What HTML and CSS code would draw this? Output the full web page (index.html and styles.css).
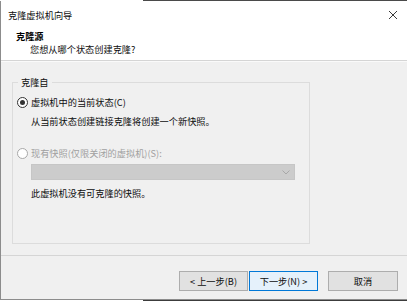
FILE: index.html
```html
<!DOCTYPE html>
<html lang="zh-CN">
<head>
<meta charset="utf-8">
<title>克隆虚拟机向导</title>
<link rel="stylesheet" href="styles.css">
</head>
<body>
<div class="topline"></div>
<div class="window">
  <div class="titlebar">
    <span class="title">克隆虚拟机向导</span>
    <svg class="close" width="10" height="10" viewBox="0 0 10 10"><path d="M1 1 L9 9 M9 1 L1 9" stroke="#3a3a3a" stroke-width="1" fill="none"/></svg>
  </div>
  <div class="header">
    <div class="h-title">克隆源</div>
    <div class="h-sub">您想从哪个状态创建克隆?</div>
  </div>
  <div class="content">
    <fieldset class="group">
      <legend class="legend">克隆自</legend>
      <div class="radio-row">
        <span class="radio checked"></span>
        <span>虚拟机中的当前状态(C)</span>
      </div>
      <div class="desc">从当前状态创建链接克隆将创建一个新快照。</div>
      <div class="radio-row disabled second">
        <span class="radio"></span>
        <span>现有快照(仅限关闭的虚拟机)(S):</span>
      </div>
      <div class="select">
        <svg class="chev" width="8" height="5" viewBox="0 0 8 5"><path d="M0.5 0.5 L4 4 L7.5 0.5" stroke="#a8a8a8" stroke-width="1" fill="none"/></svg>
      </div>
      <div class="note">此虚拟机没有可克隆的快照。</div>
    </fieldset>
  </div>
  <div class="footer">
    <button class="btn">&lt; 上一步(B)</button>
    <button class="btn default">下一步(N) &gt;</button>
    <button class="btn cancel">取消</button>
  </div>
</div>
<div class="bottomline"></div>
</body>
</html>
```

FILE: styles.css
```css
* { box-sizing: border-box; }
html, body { margin: 0; padding: 0; }
body {
  width: 407px;
  height: 301px;
  overflow: hidden;
  background: #ffffff;
  font-family: "Noto Sans CJK SC", "Noto Sans", sans-serif;
  font-size: 9.2px;
  color: #0d0d0d;
  display: flex;
  flex-direction: column;
}
.topline {
  height: 1px;
  background: linear-gradient(to right, #ffffff 0, #ffffff 143px, #4a4a4a 143px);
}
.bottomline {
  height: 1px;
  background: linear-gradient(to right, #ffffff 0, #ffffff 143px, #3c3c3c 143px);
}
.window {
  height: 299px;
  border-left: 1px solid #8c8c8c;
  border-bottom: 1px solid #8c8c8c;
  display: flex;
  flex-direction: column;
  background: #f0f0f0;
}
.titlebar {
  height: 28px;
  background: #ffffff;
  display: flex;
  align-items: center;
  justify-content: space-between;
  padding: 0 9px 0 7px;
}
.title { font-size: 9.2px; color: #0d0d0d; }
.close { display: block; }
.header {
  background: #ffffff;
  height: 32px;
  padding: 1px 0 0 15px;
  border-bottom: 1px solid #d5d5d5;
}
.h-title { font-weight: bold; line-height: 13px; color: #000; }
.h-sub { line-height: 13px; padding-left: 14px; }
.content {
  flex: 1;
  padding: 14px 0 0 11px;
  border-top: 1px solid #fafafa;
}
.group {
  margin: 0;
  width: 298px;
  height: 168px;
  border: 1px solid #dcdcdc;
  padding: 7px 0 0 4px;
}
.legend {
  padding: 0 3px;
  margin-left: 1px;
  line-height: 13px;
}
.radio-row {
  display: flex;
  align-items: center;
  height: 13px;
  line-height: 13px;
}
.radio-row.second { margin-top: 19px; }
.radio-row.disabled { color: #a0a0a0; }
.radio {
  width: 11px;
  height: 11px;
  border-radius: 50%;
  border: 1px solid #a8a8a8;
  background: #ffffff;
  margin-right: 3px;
  display: flex;
  align-items: center;
  justify-content: center;
  flex: none;
}
.radio.checked { border-color: #333333; }
.radio.checked::after {
  content: "";
  width: 5px;
  height: 5px;
  border-radius: 50%;
  background: #333333;
}
.desc {
  margin-top: 6px;
  padding-left: 14px;
  line-height: 13px;
}
.select {
  margin: 4px 0 0 14px;
  width: 264px;
  height: 16px;
  background: #cccccc;
  border: 1px solid #c6c6c6;
  display: flex;
  align-items: center;
  justify-content: flex-end;
  padding-right: 4px;
}
.chev { display: block; }
.note {
  margin-top: 7px;
  padding-left: 14px;
  line-height: 13px;
}
.footer {
  height: 44px;
  border-top: 1px solid #d5d5d5;
  display: flex;
  align-items: flex-start;
  justify-content: flex-end;
  padding: 15px 9px 0 0;
}
.btn {
  font-family: inherit;
  font-size: 9.2px;
  color: #0d0d0d;
  width: 69px;
  height: 20px;
  padding: 0;
  background: #e1e1e1;
  border: 1px solid #adadad;
  border-radius: 0;
}
.btn.default {
  margin-left: 1px;
  background: #e5f1fb;
  border-color: #0078d7;
}
.btn.cancel {
  margin-left: 10px;
  width: 70px;
}
```
